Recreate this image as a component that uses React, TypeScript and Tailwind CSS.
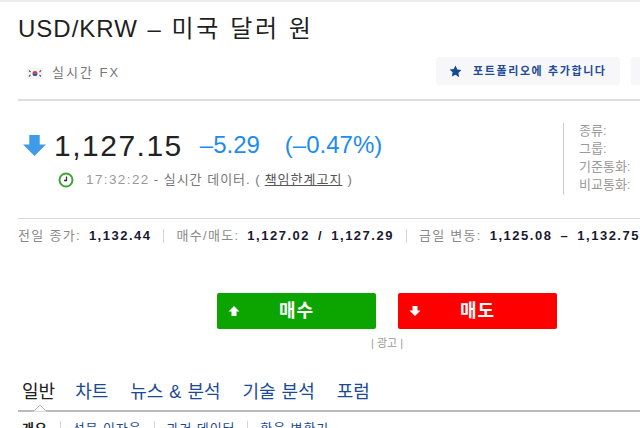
const font = "font-['Liberation_Sans','Noto_Sans_CJK_KR',sans-serif]"

function Flag() {
  return (
    <svg width="16" height="11" viewBox="0 0 16 11" className="shrink-0">
      <rect width="16" height="11" fill="#f4f4f4" />
      <path d="M5.5 5.5a2.5 2.5 0 0 1 5 0z" fill="#d8333f" />
      <path d="M5.5 5.5a2.5 2.5 0 0 0 5 0z" fill="#2a4a9a" />
      <path d="M2 2.5l1.5 1.5M2 8.5l1.5-1.5M14 2.5l-1.5 1.5M14 8.5l-1.5-1.5" stroke="#555" strokeWidth="1.1" />
    </svg>
  )
}

function Arrow({ up, className }: { up?: boolean; className: string }) {
  return (
    <svg viewBox="0 0 24 24" className={className} fill="currentColor">
      {up ? <path d="M12 2 23 13h-6v9H7v-9H1z" /> : <path d="M7 2h10v9h6L12 22 1 11h6z" />}
    </svg>
  )
}

function Stat({ label, children }: { label: string; children: React.ReactNode }) {
  return (
    <span className="whitespace-nowrap flex">
      <span className="text-[#8a8a8a] tracking-[1.3px] mr-[8px]">{label}:</span>
      <span className="font-bold text-[#1a1a2e] tracking-[1.5px] [word-spacing:3px]">{children}</span>
    </span>
  )
}

const Sep = () => <span className="mx-[12px] h-[14px] w-px shrink-0 bg-[#d5d5d5]" />

export default function App() {
  return (
    <div className={`${font} w-[640px] h-[428px] overflow-hidden bg-white border-t-2 border-[#eeeeee] pl-[18px]`}>
      <h1 className="mt-[11px] h-[32px] text-[24px] leading-[32px] text-[#1f1f1f] whitespace-nowrap tracking-[1px]">
        USD/KRW <span className="ml-[2px]">–</span>{" "}
        <span className="ml-[2px] tracking-[2.6px]">미국 달러 원</span>
      </h1>

      <div className="mt-[12px] flex items-center h-[28px] w-[700px]">
        <div className="ml-[9px] pt-[4px] flex items-center gap-[9px] w-[409px] text-[13px] tracking-[2px] text-[#777777]">
          <Flag />
          <span>실시간 FX</span>
        </div>
        <button className="h-[28px] w-[184px] rounded-[3px] bg-[#f7f7f9] flex items-center pl-[13px] gap-[11px] text-[11px] font-bold tracking-[1.6px] text-[#1f4a96] whitespace-nowrap">
          <svg viewBox="0 0 24 24" className="w-[13px] h-[13px]" fill="#174a91">
            <path d="M12 1l3.4 7.2 7.6 1-5.600 5.400 1.400 7.800L12 18l-6.800 3.400 1.400-7.800L1 8.200l7.600-1z" />
          </svg>
          포트폴리오에 추가합니다
        </button>
        <div className="ml-[11px] h-[28px] w-[60px] rounded-[3px] bg-[#f7f7f9]" />
      </div>

      <div className="mt-[14px] h-[2px] w-[640px] bg-[#dddddd]" />

      <div className="mt-[22px] flex w-[640px] h-[72px]">
        <div className="w-[545px] pt-[5px]">
          <div className="flex items-center h-[34px] ml-[4px]">
            <Arrow className="w-[25px] h-[25px] text-[#3d9be9]" />
            <span className="ml-[7px] text-[30px] text-[#222222] tracking-[1.5px]">1,127.15</span>
            <span className="ml-[17px] text-[24px] text-[#1b8cf2]">–5.29</span>
            <span className="ml-[25px] text-[24px] text-[#1b8cf2]">(–0.47%)</span>
          </div>
          <div className="mt-[10px] ml-[40px] flex items-center text-[13px] leading-[16px] tracking-[1px] text-[#777777] whitespace-nowrap">
            <svg viewBox="0 0 16 16" className="w-[16px] h-[16px]" fill="none">
              <circle cx="8" cy="8" r="6.500" stroke="#3fa535" strokeWidth="2" />
              <path d="M8.500 4.500v4H6" stroke="#333" strokeWidth="1.300" />
            </svg>
            <span className="ml-[12px] text-[#999999] text-[13.500px] tracking-[1.4px]">17:32:22</span>
            <span className="ml-[4px]">- 실시간 데이터. (</span>
            <span className="ml-[4px] underline text-[#555555]">책임한계고지</span>
            <span className="ml-[5px]">)</span>
          </div>
        </div>
        <div className="h-[72px] border-l border-[#cccccc] pl-[15px] text-[13px] leading-[18px] text-[#999999] whitespace-nowrap">
          <div className="-mt-[1px]">종류:</div>
          <div>그룹:</div>
          <div>기준통화:</div>
          <div>비교통화:</div>
        </div>
      </div>

      <div className="mt-[23px] h-px w-[640px] bg-[#d9d9d9]" />

      <div className="mt-[9px] flex items-center text-[13px] leading-[16px] whitespace-nowrap">
        <Stat label="전일 종가">1,132.44</Stat>
        <Sep />
        <Stat label="매수/매도">1,127.02 / 1,127.29</Stat>
        <Sep />
        <Stat label="금일 변동">1,125.08 – 1,132.75</Stat>
      </div>

      <div className="mt-[49px] ml-[199px] flex gap-[22px]">
        <button className="relative w-[159px] h-[36px] rounded-[2px] bg-[#0ca500] text-white font-bold text-[18px] tracking-[1px] flex items-center justify-center">
          <Arrow up className="absolute left-[11px] top-[12px] w-[12px] h-[12px]" />
          <span>매수</span>
        </button>
        <button className="relative w-[159px] h-[36px] rounded-[2px] bg-[#ff0000] text-white font-bold text-[18px] tracking-[1px] flex items-center justify-center">
          <Arrow className="absolute left-[11px] top-[12px] w-[12px] h-[12px]" />
          <span>매도</span>
        </button>
      </div>
      <div className="mt-[7px] ml-[353px] text-[11px] leading-[14px] text-[#999999]">| 광고 |</div>

      <div className="mt-[29px] w-[640px] border-b-2 border-[#bbbbbb] h-[33px] flex pl-[4px] text-[18px] leading-[26px] text-[#1a4a96] whitespace-nowrap relative [word-spacing:1px]">
        <span className="text-[#222222]">일반</span>
        <span className="ml-[20px]">차트</span>
        <span className="ml-[22px]">뉴스 & 분석</span>
        <span className="ml-[22px]">기술 분석</span>
        <span className="ml-[22px]">포럼</span>
        <svg width="14" height="7" viewBox="0 0 14 7" className="absolute left-[15px] bottom-[-2px]">
          <path d="M0 7 7 0l7 7z" fill="#fff" stroke="#bbbbbb" />
        </svg>
      </div>

      <div className="mt-[9px] flex text-[13px] leading-[16px] tracking-[0.9px] text-[#1a4a96] whitespace-nowrap ml-[4px]">
        <span className="font-bold text-[#222222]">개요</span>
        <Sep />
        <span>선물 이자율</span>
        <Sep />
        <span>과거 데이터</span>
        <Sep />
        <span>환율 변환기</span>
      </div>
    </div>
  )
}
